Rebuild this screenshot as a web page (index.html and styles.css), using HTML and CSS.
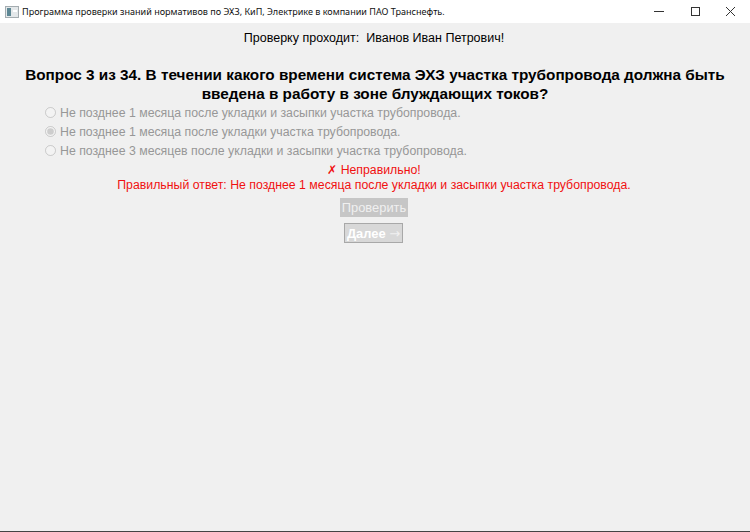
FILE: index.html
```html
<!DOCTYPE html>
<html lang="ru">
<head>
    <meta charset="UTF-8">
    <title>Программа проверки знаний</title>
    <link rel="stylesheet" href="styles.css">
</head>
<body>
    <div class="titlebar">
        <svg class="app-icon" width="16" height="16" viewBox="0 0 16 16">
            <rect x="1.5" y="2.5" width="13" height="11" fill="#e4e8ea" stroke="#a4acb0"/>
            <rect x="3" y="4" width="4" height="8" fill="#5d8794"/>
            <rect x="9" y="6" width="4" height="2" fill="#fff"/>
        </svg>
        <span class="title-text">Программа проверки знаний нормативов по ЭХЗ, КиП, Электрике в компании ПАО Транснефть.</span>
        <div class="window-buttons">
            <svg width="36" height="22" viewBox="0 0 36 22"><path d="M14 10.5h10" stroke="#333" fill="none"/></svg>
            <svg width="36" height="22" viewBox="0 0 36 22"><rect x="15.5" y="6.5" width="8" height="8" stroke="#333" fill="none"/></svg>
            <svg width="38" height="22" viewBox="0 0 38 22"><path d="M14 6l9 9M23 6l-9 9" stroke="#333" fill="none"/></svg>
        </div>
    </div>

    <div class="content">
        <p class="student">Проверку проходит:&nbsp; Иванов Иван Петрович!</p>
        <h1 class="question">Вопрос 3 из 34. В течении какого времени система ЭХЗ участка трубопровода должна быть введена в работу в зоне блуждающих токов?</h1>

        <div class="answers">
            <label class="answer"><input type="radio" name="a" disabled>Не позднее 1 месяца после укладки и засыпки участка трубопровода.</label>
            <label class="answer"><input type="radio" name="a" checked disabled>Не позднее 1 месяца после укладки участка трубопровода.</label>
            <label class="answer"><input type="radio" name="a" disabled>Не позднее 3 месяцев после укладки и засыпки участка трубопровода.</label>
        </div>

        <div class="result">
            <div>✗ Неправильно!</div>
            <div>Правильный ответ: Не позднее 1 месяца после укладки и засыпки участка трубопровода.</div>
        </div>

        <button class="check-btn" disabled>Проверить</button>
        <button class="next-btn" disabled>Далее <span class="arrow">→</span></button>
    </div>
</body>
</html>
```

FILE: styles.css
```css
html, body {
    height: 100%;
}

body {
    margin: 0;
    font-family: 'Liberation Sans', Arial, sans-serif;
    font-size: 12.3px;
    color: #000;
    background-color: #f0f0f0;
    border-bottom: 1px solid #444;
    box-sizing: border-box;
    overflow: hidden;
}

.titlebar {
    display: flex;
    align-items: center;
    height: 23px;
    background-color: #fff;
    padding-left: 4px;
}

.app-icon {
    margin-right: 2px;
}

.title-text {
    font-family: 'Noto Sans', 'Open Sans', sans-serif;
    font-size: 9.05px;
    color: #111;
}

.window-buttons {
    display: flex;
    margin-left: auto;
}

.content {
    display: flex;
    flex-direction: column;
    align-items: center;
}

.student {
    margin: 7px 2px 0 0;
    font-size: 12.5px;
    line-height: 16px;
}

.question {
    margin: 19px 20px 0;
    font-size: 15.3px;
    line-height: 19px;
    font-weight: bold;
    text-align: center;
}

.answers {
    align-self: flex-start;
    margin: 0 0 0 45px;
}

.answer {
    display: flex;
    align-items: center;
    height: 19px;
    color: #979797;
}

.answer input {
    width: 11px;
    height: 11px;
    margin: 0 4px 0 0;
}

.result {
    margin: 3px 2px 0 0;
    color: #f01010;
    text-align: center;
    line-height: 15px;
}

.check-btn {
    margin: 5px 2px 0 0;
    width: 68px;
    height: 19px;
    padding: 0;
    border: none;
    background-color: #c6c6c6;
    color: #f0f0f0;
    font: 12.9px 'Liberation Sans', Arial, sans-serif;
}

.next-btn {
    margin: 6px 3px 0 0;
    width: 59px;
    height: 20px;
    padding: 0;
    border: 1px solid #a8a8a8;
    background-color: #d8d8d8;
    color: #fff;
    font: bold 12.9px 'Liberation Sans', Arial, sans-serif;
    white-space: nowrap;
}

.arrow {
    font-family: 'DejaVu Sans', sans-serif;
    font-weight: normal;
    font-size: 13px;
    color: #f0f0f0;
}
```
